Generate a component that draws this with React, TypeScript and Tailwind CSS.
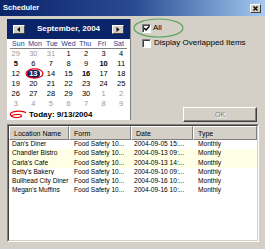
const font = { fontFamily: '"Liberation Sans", Arial, sans-serif' }

const weeks: { d: number; muted?: boolean; bold?: boolean }[][] = [
  [{ d: 29, muted: true }, { d: 30, muted: true }, { d: 31, muted: true }, { d: 1 }, { d: 2 }, { d: 3 }, { d: 4 }],
  [{ d: 5, bold: true }, { d: 6 }, { d: 7 }, { d: 8 }, { d: 9 }, { d: 10, bold: true }, { d: 11 }],
  [{ d: 12 }, { d: 13 }, { d: 14 }, { d: 15 }, { d: 16, bold: true }, { d: 17 }, { d: 18 }],
  [{ d: 19 }, { d: 20 }, { d: 21 }, { d: 22 }, { d: 23 }, { d: 24 }, { d: 25 }],
  [{ d: 26 }, { d: 27 }, { d: 28 }, { d: 29 }, { d: 30 }, { d: 1, muted: true }, { d: 2, muted: true }],
  [3, 4, 5, 6, 7, 8, 9].map((d) => ({ d, muted: true })),
]

const rows = [
  { name: "Dan's Diner", date: "2004-09-05 15:...", hl: false },
  { name: "Chandler Bistro", date: "2004-09-13 09:...", hl: true },
  { name: "Carla's Cafe", date: "2004-09-13 14:...", hl: true },
  { name: "Betty's Bakery", date: "2004-09-10 09:...", hl: false },
  { name: "Bullhead City Diner", date: "2004-09-16 10:...", hl: false },
  { name: "Megan's Muffins", date: "2004-09-16 10:...", hl: false },
]

function ArrowButton({ dir }: { dir: "left" | "right" }) {
  return (
    <div className="w-[12px] h-[9px] bg-[#d4d0c8] border-t border-l border-white border-r border-b border-r-[#404040] border-b-[#404040] flex items-center justify-center">
      <svg width="4" height="5" viewBox="0 0 4 5">
        {dir === "left" ? <path d="M3 0 L0 2.5 L3 5 Z" fill="#000" /> : <path d="M0.5 0 L3.5 2.5 L0.5 5 Z" fill="#000" />}
      </svg>
    </div>
  )
}

function Checkbox({ checked }: { checked?: boolean }) {
  return (
    <div className="w-[9px] h-[9px] bg-white border border-t-[#808080] border-l-[#808080] border-r-white border-b-white shadow-[inset_1px_1px_0_#404040] flex items-center justify-center">
      {checked && (
        <svg width="7" height="7" viewBox="0 0 7 7">
          <path d="M1 3 L3 5 L6.5 1.2" stroke="#000" strokeWidth="1.5" fill="none" />
        </svg>
      )}
    </div>
  )
}

export default function App() {
  return (
    <div style={font} className="w-[265px] h-[249px] bg-[#d4d0c8] flex flex-col overflow-hidden">
      <div className="h-[16px] bg-gradient-to-r from-[#0a246a] via-[#2a4a90] to-[#a6caf0] flex items-center justify-between pl-[3px] pr-[4px]">
        <span className="text-white font-bold text-[7.5px] leading-none">Scheduler</span>
        <div className="w-[11px] h-[9px] bg-[#d4d0c8] border-t border-l border-white border-r border-b border-r-[#404040] border-b-[#404040] flex items-center justify-center">
          <svg width="5" height="5" viewBox="0 0 5 5">
            <path d="M0.5 0.5 L4.5 4.5 M4.5 0.5 L0.5 4.5" stroke="#000" strokeWidth="1.3" />
          </svg>
        </div>
      </div>

      <div className="flex pl-[7px] pt-[3px] h-[106px]">
        <div className="w-[124px] h-[101px] bg-white border-r border-[#808080] flex flex-col">
          <div className="h-[20px] bg-[#0a246a] flex items-center justify-between px-[6px]">
            <ArrowButton dir="left" />
            <span className="text-white font-bold text-[8px] leading-none">September, 2004</span>
            <ArrowButton dir="right" />
          </div>
          <div className="mx-[3px] h-[10px] border-b border-[#808080] grid grid-cols-7 items-center text-[7px] leading-none text-[#1c3c8c]">
            {["Sun", "Mon", "Tue", "Wed", "Thu", "Fri", "Sat"].map((n) => (
              <span key={n} className="text-center">{n}</span>
            ))}
          </div>
          {weeks.map((w, i) => (
            <div key={i} className="h-[10px] grid grid-cols-7 items-center text-[7.5px] leading-none">
              {w.map((c, j) =>
                !c.muted && c.d === 13 ? (
                  <div key={j} className="relative flex justify-center">
                    <span className="bg-[#0a246a] text-white rounded-full px-[2px] font-bold">13</span>
                    <svg className="absolute -top-[2px] left-[0px]" width="19" height="11" viewBox="0 0 19 11">
                      <ellipse cx="9.5" cy="5.5" rx="8.5" ry="4.7" stroke="#e8000a" strokeWidth="1.2" fill="none" />
                    </svg>
                  </div>
                ) : (
                  <span
                    key={j}
                    className={`text-center ${c.muted ? "text-[#9a9a9a]" : "text-black"} ${c.bold ? "font-bold" : ""}`}
                  >
                    {c.d}
                  </span>
                )
              )}
            </div>
          ))}
          <div className="h-[11px] flex items-center pl-[2px] gap-[2px]">
            <svg width="18" height="9" viewBox="0 0 18 9">
              <path d="M17 3 C15 0.5 5 0.5 2 3 C0 5 3 8 9 7.5 C13 7 14 5 10 4.5 C7 4.3 4 5 1.5 6" stroke="#e8000a" strokeWidth="1.2" fill="none" />
            </svg>
            <span className="font-bold text-[8px] leading-none">Today: 9/13/2004</span>
          </div>
        </div>

        <div className="flex-1 flex flex-col pl-[11px]">
          <div className="relative h-[19px] flex items-center gap-[2px]">
            <svg className="absolute -left-[9px] -top-[1px]" width="51" height="20" viewBox="0 0 51 20">
              <ellipse cx="25.5" cy="10" rx="24.5" ry="9" stroke="#5aa55a" strokeWidth="1.2" fill="none" />
            </svg>
            <Checkbox checked />
            <span className="text-[8px] leading-none">All</span>
          </div>
          <div className="h-[10px] flex items-center gap-[3px] mt-[1px]">
            <Checkbox />
            <span className="text-[8px] leading-none">Display Overlapped Items</span>
          </div>
          <div className="flex justify-end pr-[8px] mt-[59px]">
            <div className="w-[74px] h-[15px] border-t border-l border-white border-r border-b border-r-[#404040] border-b-[#404040] shadow-[inset_-1px_-1px_0_#808080] flex items-center justify-center">
              <span className="text-[7px] leading-none text-[#808080] [text-shadow:1px_1px_0_#fff]">OK</span>
            </div>
          </div>
        </div>
      </div>

      <div className="ml-[7px] mt-[2px] w-[252px] h-[118px] border border-t-[#808080] border-l-[#808080] border-r-white border-b-white">
        <div className="h-full bg-white border border-t-[#404040] border-l-[#404040] border-r-[#d4d0c8] border-b-[#d4d0c8] flex flex-col text-[6.6px] leading-none">
          <div className="h-[14px] flex bg-[#d4d0c8] shrink-0 text-[7px]">
            {[
              ["Location Name", "w-[60px]"],
              ["Form", "w-[62px]"],
              ["Date", "w-[62px]"],
              ["Type", "flex-1"],
            ].map(([t, w]) => (
              <div
                key={t}
                className={`${w} h-full flex items-center pl-[4px] border-t border-l border-white border-r border-b border-r-[#808080] border-b-[#808080]`}
              >
                {t}
              </div>
            ))}
          </div>
          {rows.map((r) => (
            <div key={r.name} className={`h-[9.2px] flex items-center ${r.hl ? "bg-[#ffffe6]" : ""}`}>
              <span className="w-[60px] pl-[3px] whitespace-nowrap overflow-hidden">{r.name}</span>
              <span className="w-[62px] pl-[5px] whitespace-nowrap">Food Safety 10...</span>
              <span className="w-[62px] pl-[3px] whitespace-nowrap">{r.date}</span>
              <span className="flex-1 pl-[5px]">Monthly</span>
            </div>
          ))}
        </div>
      </div>
    </div>
  )
}
